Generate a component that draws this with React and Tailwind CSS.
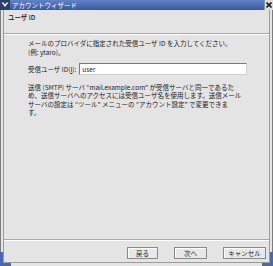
import React from "react";

const font = { fontFamily: '"Noto Sans CJK JP", "DejaVu Sans", sans-serif' };

function Button({ children, width }) {
  return (
    <button
      className={`h-[12px] ${width} border border-[#8a8a8a] bg-[#e8e8e8] shadow-[inset_1px_1px_0_#ffffff] text-[6.5px] leading-[10px] text-[#202020]`}
    >
      {children}
    </button>
  );
}

export default function App() {
  return (
    <div
      className="w-[273px] h-[266px] flex flex-col bg-[#e4e4e4] text-[#1a1a1a] overflow-hidden"
      style={font}
    >
      {/* title bar */}
      <div className="h-[10px] flex items-center bg-gradient-to-b from-[#6382c6] to-[#3a58a0]">
        <div className="w-[10px] h-[10px] flex items-center justify-center bg-[#2e3f66]">
          <svg width="8" height="6" viewBox="0 0 8 6">
            <path d="M0.5 0.5 L4 5 L7.5 0.5 L5.5 0.5 L4 2.6 L2.5 0.5 Z" fill="#f0f0f0" />
          </svg>
        </div>
        <span className="ml-[2px] text-[6.5px] leading-[10px] text-white">
          アカウントウィザード
        </span>
        <div className="flex-1" />
        <div className="w-[9px] h-[10px] flex items-center justify-center bg-[#dcdcdc] border-l border-[#909090]">
          <svg width="6" height="6" viewBox="0 0 6 6">
            <path d="M0.5 0.5 L5.5 5.5 M5.5 0.5 L0.5 5.5" stroke="#202020" strokeWidth="1.6" />
          </svg>
        </div>
      </div>

      {/* window body with frame */}
      <div className="flex-1 flex flex-col border-x border-[#7c7c7c] relative">
        <div className="flex-1 flex flex-col mx-[2px] border-x border-[#9c9c9c]">
          {/* header */}
          <div className="h-[23px] pl-[4px] pt-[3px] text-[6.5px] leading-[9px] font-medium">
            ユーザ ID
          </div>
          <div className="border-t border-[#a8a8a8] border-b border-b-white" />

          {/* content */}
          <div className="flex-1 flex flex-col pl-[24px] pr-[22px] pt-[4px] text-[6.5px]">
            <div className="leading-[9px] whitespace-nowrap">
              メールのプロバイダに指定された受信ユーザ ID を入力してください。
            </div>
            <div className="leading-[9px] whitespace-nowrap">(例: ytaro)。</div>

            <div className="mt-[6px] flex items-center h-[12px]">
              <span className="leading-[9px] whitespace-nowrap">
                受信ユーザ ID(<span className="underline">I</span>):
              </span>
              <div className="ml-[3px] flex-1 h-[12px] bg-white border border-[#7a7a7a] border-b-[#d0d0d0] border-r-[#d0d0d0] pl-[2px] leading-[10px]">
                user
              </div>
            </div>

            <div className="mt-[8px] flex flex-col whitespace-nowrap">
              <div className="h-[8.4px] leading-[8.4px]">
                送信 (SMTP) サーバ “mail.example.com” が受信サーバと同一であるた
              </div>
              <div className="h-[8.4px] leading-[8.4px]">
                め、送信サーバへのアクセスには受信ユーザ名を使用します。送信メール
              </div>
              <div className="h-[8.4px] leading-[8.4px]">
                サーバの設定は “ツール” メニューの “アカウント設定” で変更できま
              </div>
              <div className="h-[8.4px] leading-[8.4px]">す。</div>
            </div>
          </div>

          {/* bottom buttons */}
          <div className="border-t border-[#a8a8a8]" />
          <div className="border-t border-white" />
          <div className="h-[21px] flex items-start justify-end gap-[16px] pt-[6px] pr-[3px]">
            <Button width="w-[31px]">戻る</Button>
            <Button width="w-[33px]">次へ</Button>
            <Button width="w-[43px]">キャンセル</Button>
          </div>
        </div>
        <div className="h-[4px] flex border-t border-[#9c9c9c] bg-[#e4e4e4]">
          <div className="w-[10px] h-full bg-[#4a68b0]" />
          <div className="flex-1" />
          <div className="w-[10px] h-full bg-[#4a68b0]" />
        </div>
        {/* resize corner handles */}
        <div className="absolute left-[-1px] bottom-0 w-[3px] h-[14px] bg-[#4a68b0]" />
        <div className="absolute right-[-1px] bottom-0 w-[3px] h-[14px] bg-[#4a68b0]" />
      </div>
    </div>
  );
}
